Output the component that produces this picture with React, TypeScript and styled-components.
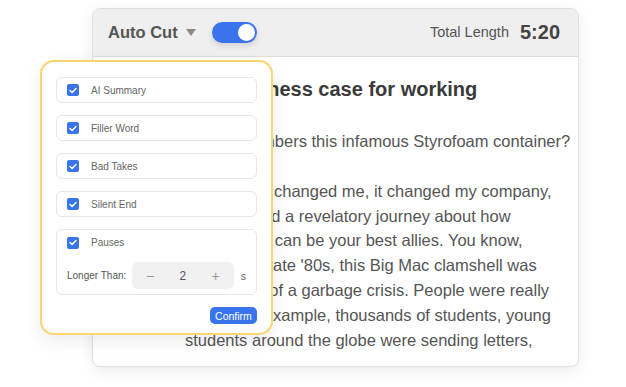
import React from 'react';
import styled, { createGlobalStyle } from 'styled-components';

const GlobalStyle = createGlobalStyle`
  body {
    margin: 0;
    background: #ffffff;
    font-family: "Liberation Sans", Arial, sans-serif;
  }
`;

const Stage = styled.div`
  position: relative;
  width: 626px;
  height: 387px;
  overflow: hidden;
`;

const Card = styled.div`
  margin: 8px 0 0 92px;
  width: 487px;
  height: 359px;
  box-sizing: border-box;
  border: 1px solid #e0e0e0;
  border-radius: 8px;
  background: #fff;
  box-shadow: 0 4px 14px rgba(0, 0, 0, 0.08);
  overflow: hidden;
  display: flex;
  flex-direction: column;
`;

const Header = styled.div`
  height: 48px;
  flex: none;
  display: flex;
  align-items: center;
  padding: 0 18px 1px 15px;
  box-sizing: border-box;
  background: #efefef;
  border-bottom: 1px solid #dedede;
`;

const Title = styled.span`
  font-size: 16.5px;
  font-weight: 700;
  color: #555;
`;

const Caret = styled.svg`
  margin-left: 8px;
  width: 10px;
  height: 7px;
`;

const Toggle = styled.div`
  margin-left: 16px;
  width: 45px;
  height: 21px;
  border-radius: 11px;
  background: #3a74ec;
  box-shadow: 0 3px 6px rgba(0, 0, 0, 0.12);
  display: flex;
  align-items: center;
  justify-content: flex-end;
  padding: 0 2px;
  box-sizing: border-box;
`;

const Knob = styled.div`
  width: 17px;
  height: 17px;
  border-radius: 50%;
  background: #fff;
`;

const Spacer = styled.div`
  flex: 1;
`;

const LengthLabel = styled.span`
  font-size: 14.5px;
  color: #555;
`;

const LengthValue = styled.span`
  margin-left: 11px;
  font-size: 20px;
  font-weight: 700;
  color: #444;
`;

const Body = styled.div`
  padding: 20px 0 0 92px;
  white-space: nowrap;
`;

const Heading = styled.h1`
  margin: 0 0 28px;
  font-size: 20px;
  line-height: 24px;
  font-weight: 700;
  color: #3a3a3a;
`;

const Para = styled.p`
  margin: 0 0 25px;
  font-size: 16.5px;
  line-height: 24.8px;
  color: #555;
`;

const Popup = styled.div`
  position: absolute;
  left: 40px;
  top: 60px;
  width: 233px;
  box-sizing: border-box;
  border: 2px solid #f8d670;
  border-radius: 14px;
  background: #fff;
  box-shadow: 0 6px 18px rgba(0, 0, 0, 0.08);
  padding: 15px 14px 9px;
  display: flex;
  flex-direction: column;
  gap: 12px;
`;

const Option = styled.div`
  box-sizing: border-box;
  border: 1px solid #e6e6e6;
  border-radius: 6px;
  padding: 0 10px;
  display: flex;
  flex-direction: column;
`;

const OptionRow = styled.div<{ $h: number }>`
  height: ${p => p.$h}px;
  display: flex;
  align-items: center;
  gap: 12px;
`;

const Check = styled.span`
  width: 12px;
  height: 12px;
  border-radius: 2px;
  background: #3a74ec;
  display: flex;
  align-items: center;
  justify-content: center;
`;

const OptionLabel = styled.span`
  font-size: 10px;
  color: #666;
`;

const StepRow = styled.div`
  margin: 7px 0 5px;
  display: flex;
  align-items: center;
`;

const StepLabel = styled.span`
  width: 65px;
  font-size: 10px;
  color: #555;
`;

const Stepper = styled.div`
  width: 102px;
  height: 27px;
  border-radius: 6px;
  background: #f0f0f0;
  display: flex;
  align-items: center;
  justify-content: space-between;
  padding: 0 14px 0 14px;
  box-sizing: border-box;
`;

const StepSign = styled.span`
  font-size: 14px;
  color: #999;
`;

const StepValue = styled.span`
  font-size: 12px;
  color: #555;
`;

const Unit = styled.span`
  margin-left: 7px;
  font-size: 10.5px;
  color: #666;
`;

const Confirm = styled.button`
  align-self: flex-end;
  width: 47px;
  height: 17px;
  padding: 0;
  border: none;
  border-radius: 5px;
  background: #3a74ec;
  color: #fff;
  font-family: "Liberation Sans", Arial, sans-serif;
  font-size: 10.5px;
`;

const CheckBox = () => (
  <Check>
    <svg width="8" height="7" viewBox="0 0 8 7">
      <path d="M1 3.6 L3.1 5.6 L7 1.4" fill="none" stroke="#fff" strokeWidth="1.4" strokeLinecap="round" strokeLinejoin="round" />
    </svg>
  </Check>
);

const options = ['AI Summary', 'Filler Word', 'Bad Takes', 'Silent End'];

export default function App() {
  return (
    <>
      <GlobalStyle />
      <Stage>
        <Card>
          <Header>
            <Title>Auto Cut</Title>
            <Caret viewBox="0 0 10 7">
              <polygon points="0,0 10,0 5,7" fill="#8a8a8a" />
            </Caret>
            <Toggle>
              <Knob />
            </Toggle>
            <Spacer />
            <LengthLabel>Total Length</LengthLabel>
            <LengthValue>5:20</LengthValue>
          </Header>
          <Body>
            <Heading>The business case for working</Heading>
            <Para>Who remembers this infamous Styrofoam container?</Para>
            <Para>
              This design changed me, it changed my company,<br />
              and it started a revelatory journey about how<br />
              adversaries can be your best allies. You know,<br />
              back in the late '80s, this Big Mac clamshell was<br />
              the symbol of a garbage crisis. People were really<br />
              upset. For example, thousands of students, young<br />
              students around the globe were sending letters,
            </Para>
          </Body>
        </Card>
        <Popup>
          {options.map(o => (
            <Option key={o}>
              <OptionRow $h={24}>
                <CheckBox />
                <OptionLabel>{o}</OptionLabel>
              </OptionRow>
            </Option>
          ))}
          <Option>
            <OptionRow $h={25}>
              <CheckBox />
              <OptionLabel>Pauses</OptionLabel>
            </OptionRow>
            <StepRow>
              <StepLabel>Longer Than:</StepLabel>
              <Stepper>
                <StepSign>−</StepSign>
                <StepValue>2</StepValue>
                <StepSign>+</StepSign>
              </Stepper>
              <Unit>s</Unit>
            </StepRow>
          </Option>
          <Confirm>Confirm</Confirm>
        </Popup>
      </Stage>
    </>
  );
}
